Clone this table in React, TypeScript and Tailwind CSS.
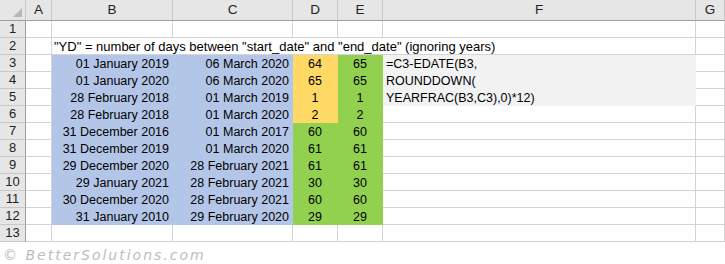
import React from "react";

const cols = ["A", "B", "C", "D", "E", "F", "G"];

const rows = [
    ["01 January 2019", "06 March 2020", "64", "65"],
    ["01 January 2020", "06 March 2020", "65", "65"],
    ["28 February 2018", "01 March 2019", "1", "1"],
    ["28 February 2018", "01 March 2020", "2", "2"],
    ["31 December 2016", "01 March 2017", "60", "60"],
    ["31 December 2019", "01 March 2020", "61", "61"],
    ["29 December 2020", "28 February 2021", "61", "61"],
    ["29 January 2021", "28 February 2021", "30", "30"],
    ["30 December 2020", "28 February 2021", "60", "60"],
    ["31 January 2010", "29 February 2020", "29", "29"],
];

const formula = ["=C3-EDATE(B3,", "ROUNDDOWN(", "YEARFRAC(B3,C3),0)*12)"];

// base cell without border colour, so filled cells can hide their gridlines
const base = "h-[17px] border-r border-b leading-[16px] whitespace-nowrap";
const cell = `${base} border-[#d4d4d4]`;
const rowHead = "h-[17px] bg-[#e6e6e6] border-r border-b border-r-[#9e9e9e] border-b-[#c8c8c8] text-[13px] leading-[16px] text-center text-[#222]";

export default function App() {
    return (
        <div className="w-[725px] h-[264px] bg-white overflow-hidden text-black" style={{ fontFamily: '"Liberation Sans", Arial, sans-serif' }}>
            <div className="grid grid-cols-[26px_26px_121px_120px_45px_45px_313px_29px] text-[12.5px]">
                {/* Column headers */}
                <div className="relative h-[21px] bg-[#e6e6e6] border-r border-b border-r-[#c8c8c8] border-b-[#9e9e9e]">
                    <svg className="absolute left-0 top-0" width="25" height="20" viewBox="0 0 25 20">
                        <polygon points="22,8 22,17 13,17" fill="#b8b8b8" />
                    </svg>
                </div>
                {cols.map((c) => (
                    <div key={c} className="h-[21px] bg-[#e6e6e6] border-r border-b border-r-[#c8c8c8] border-b-[#9e9e9e] text-[13.5px] leading-[20px] text-center text-[#222]">
                        {c}
                    </div>
                ))}

                {/* Row 1 */}
                <div className={rowHead}>1</div>
                {cols.map((c) => (
                    <div key={c} className={cell}></div>
                ))}

                {/* Row 2 */}
                <div className={rowHead}>2</div>
                <div className={cell}></div>
                <div className={`${cell} col-span-5 pl-[2px] pt-px text-[13px]`}>
                    "YD" = number of days between "start_date" and "end_date" (ignoring years)
                </div>
                <div className={cell}></div>

                {/* Rows 3 - 12 */}
                {rows.map((r, i) => {
                    const n = i + 3;
                    const dColor = i < 4 ? "bg-[#ffd966] border-[#ffd966]" : "bg-[#92d050] border-[#92d050]";
                    return (
                        <React.Fragment key={n}>
                            <div className={rowHead}>{n}</div>
                            <div className={cell}></div>
                            <div className={`${base} bg-[#b4c6e7] border-[#b4c6e7] text-right pr-[3px] pt-px`}>{r[0]}</div>
                            <div className={`${base} bg-[#b4c6e7] border-[#b4c6e7] text-right pr-[3px] pt-px`}>{r[1]}</div>
                            <div className={`${base} ${dColor} text-center pt-px`}>{r[2]}</div>
                            <div className={`${base} bg-[#92d050] border-[#92d050] text-center pt-px`}>{r[3]}</div>
                            {i < 3 ? (
                                <div className={`${base} bg-[#f2f2f2] border-[#f2f2f2] pl-[3px] pt-px`}>{formula[i]}</div>
                            ) : (
                                <div className={cell}></div>
                            )}
                            <div className={cell}></div>
                        </React.Fragment>
                    );
                })}

                {/* Row 13 */}
                <div className={rowHead}>13</div>
                {cols.map((c) => (
                    <div key={c} className={cell}></div>
                ))}
            </div>

            {/* Watermark */}
            <div className="pl-[3px] pt-[3px] text-[14px] italic tracking-[2px] text-[#bdbdbd]" style={{ fontFamily: '"DejaVu Sans", sans-serif' }}>
                © BetterSolutions.com
            </div>
        </div>
    );
}
